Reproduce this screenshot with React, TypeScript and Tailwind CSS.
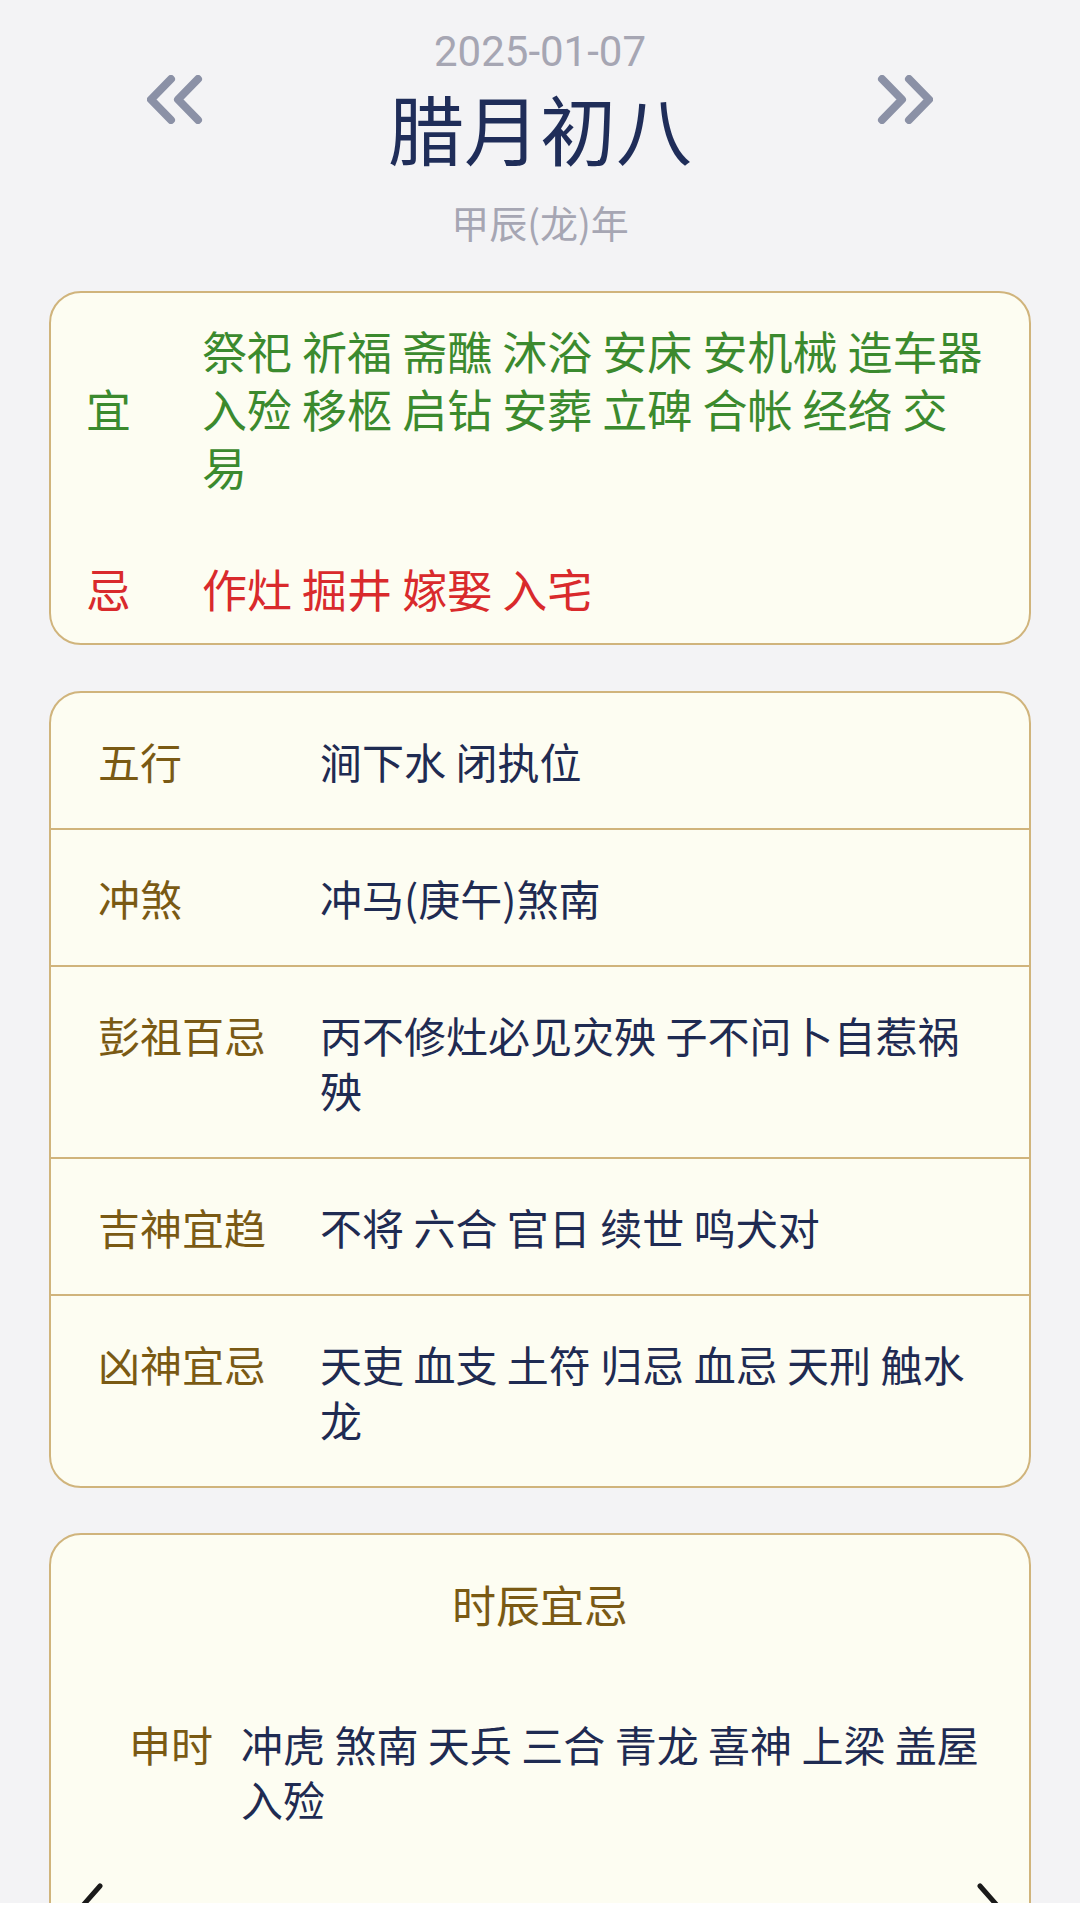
import React from 'react';

const detailRows = [
  { label: '五行', value: '涧下水 闭执位' },
  { label: '冲煞', value: '冲马(庚午)煞南' },
  { label: '彭祖百忌', value: '丙不修灶必见灾殃 子不问卜自惹祸殃' },
  { label: '吉神宜趋', value: '不将 六合 官日 续世 鸣犬对' },
  { label: '凶神宜忌', value: '天吏 血支 土符 归忌 血忌 天刑 触水龙' },
];

function DoubleChevron({ dir }: { dir: 'left' | 'right' }) {
  return (
    <svg
      width="58"
      height="49"
      viewBox="0 0 58 49"
      fill="none"
      stroke="#8b91a6"
      strokeWidth="8"
      strokeLinecap="round"
      strokeLinejoin="round"
      className={dir === 'right' ? 'scale-x-[-1]' : ''}
    >
      <polyline points="24,4 4,24.5 24,45" />
      <polyline points="51,4 31,24.5 51,45" />
    </svg>
  );
}

function Arrow({ dir }: { dir: 'left' | 'right' }) {
  return (
    <svg
      width="30"
      height="56"
      viewBox="0 0 30 56"
      fill="none"
      stroke="#1a1a1a"
      strokeWidth="5"
      strokeLinecap="round"
      strokeLinejoin="round"
      className={dir === 'right' ? 'scale-x-[-1]' : ''}
    >
      <polyline points="26,3 4,28 26,53" />
    </svg>
  );
}

export default function App() {
  return (
    <div className="h-[1903px] overflow-hidden bg-[#f3f3f5] px-[49px] font-['Noto_Sans_CJK_SC',sans-serif]">
      {/* 头部 */}
      <div className="flex justify-between px-[98px] pt-[31px]">
        <button className="mt-[44px] self-start">
          <DoubleChevron dir="left" />
        </button>
        <div className="flex flex-col items-center">
          <div className="font-['Roboto','Noto_Sans_CJK_SC',sans-serif] text-[42px] leading-[42px] text-[#a6a6b3]">
            2025-01-07
          </div>
          <div className="text-[76px] leading-[108px] text-[#1f2d59]">腊月初八</div>
          <div className="mt-[18px] text-[38px] leading-[46px] text-[#a6a6b3]">甲辰(龙)年</div>
        </div>
        <button className="mt-[44px] self-start">
          <DoubleChevron dir="right" />
        </button>
      </div>

      {/* 宜忌 */}
      <div className="mt-[46px] rounded-[32px] border-2 border-[#d0b47c] bg-[#fdfdf2] pl-[35px] pr-[37px] pt-[29px] pb-[25px] text-[45px] leading-[58px]">
        <div className="flex items-center">
          <div className="w-[116px] shrink-0 text-[#3b8a2e]">宜</div>
          <div className="flex-1 break-all text-[#3b8a2e]">
            祭祀 祈福 斋醮 沐浴 安床 安机械 造车器 入殓 移柩 启钻 安葬 立碑 合帐 经络 交易
          </div>
        </div>
        <div className="mt-[64px] flex items-center">
          <div className="w-[116px] shrink-0 text-[#d92a2c]">忌</div>
          <div className="flex-1 text-[#d92a2c]">作灶 掘井 嫁娶 入宅</div>
        </div>
      </div>

      {/* 详情 */}
      <div className="mt-[46px] overflow-hidden rounded-[32px] border-2 border-[#d0b47c] bg-[#fdfdf2] text-[42px] leading-[55px]">
        {detailRows.map((row, i) => (
          <div
            key={row.label}
            className={`flex items-start pl-[47px] pr-[41px] py-[40px] ${i > 0 ? 'border-t-2 border-[#d0b47c]' : ''}`}
          >
            <div className="w-[222px] shrink-0 text-[#7a5a14]">{row.label}</div>
            <div className="flex-1 break-all text-[#1f2b52]">{row.value}</div>
          </div>
        ))}
      </div>

      {/* 时辰宜忌 */}
      <div className="mt-[45px] rounded-[32px] border-2 border-[#d0b47c] bg-[#fdfdf2] pt-[41px] pb-[40px]">
        <div className="text-center text-[44px] leading-[56px] text-[#7a5a14]">时辰宜忌</div>
        <div className="mt-[84px] flex items-start pl-[78px] pr-[28px] text-[42px] leading-[55px]">
          <div className="w-[112px] shrink-0 text-[#7a5a14]">申时</div>
          <div className="flex-1 break-all text-[#1f2b52]">冲虎 煞南 天兵 三合 青龙 喜神 上梁 盖屋 入殓</div>
        </div>
        <div className="mt-[57px] flex justify-between px-[23px]">
          <Arrow dir="left" />
          <Arrow dir="right" />
        </div>
      </div>
    </div>
  );
}
